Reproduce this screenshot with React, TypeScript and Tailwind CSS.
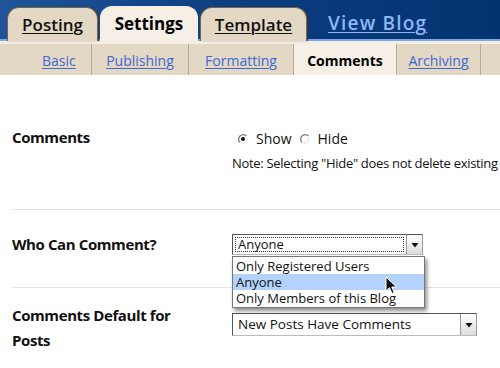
import React from 'react';

const tabs = [
  { label: 'Posting', active: false, w: 'w-[91px]' },
  { label: 'Settings', active: true, w: 'w-[98px]' },
  { label: 'Template', active: false, w: 'w-[107px]' },
];

const subTabs = [
  { label: 'Basic', w: 'w-[92px] pl-[42px]', active: false },
  { label: 'Publishing', w: 'w-[97px] justify-center', active: false },
  { label: 'Formatting', w: 'w-[105px] justify-center', active: false },
  { label: 'Comments', w: 'w-[103px] justify-center', active: true },
  { label: 'Archiving', w: 'w-[84px] justify-center', active: false },
];

const Radio = ({ checked }: { checked: boolean }) => (
  <svg width="12" height="12" viewBox="0 0 12 12" className="shrink-0">
    <path d="M9.5 3 A4.5 4.5 0 1 0 3 9.6" fill="none" stroke="#777" strokeWidth="1.3" />
    <path d="M9.8 4.2 A4.5 4.5 0 0 1 4.2 9.9" fill="none" stroke="#ddd" strokeWidth="1" />
    {checked && <circle cx="6" cy="6" r="2" fill="#111" />}
  </svg>
);

const SelectArrow = () => (
  <div className="w-[16px] h-full border-l border-[#999] bg-gradient-to-b from-[#ffffff] to-[#dcdcdc] flex items-center justify-center">
    <svg width="8" height="6" viewBox="0 0 8 6">
      <path d="M0.5 1 L7.5 1 L4 5.5 Z" fill="#111" />
    </svg>
  </div>
);

const Cursor = () => (
  <svg width="13" height="19" viewBox="0 0 13 19" className="absolute left-[152px] top-[19px]">
    <path d="M1 1 L1 15 L4.5 11.8 L7 17.5 L9.2 16.5 L6.8 11 L11.5 11 Z" fill="#111" stroke="#fff" strokeWidth="1" />
  </svg>
);

export default function App() {
  return (
    <div className="w-[500px] h-[368px] overflow-hidden bg-white font-['Open_Sans',sans-serif] text-[#111]">
      {/* top bar */}
      <div className="h-[41px] bg-gradient-to-r from-[#1f5498] via-[#0b3d80] to-[#033471] border-b-2 border-[#7ea6ea] flex items-end pl-[7px] gap-[2px]">
        {tabs.map(t => (
          <div
            key={t.label}
            className={`${t.w} -mb-[2px] rounded-t-[12px] border border-b-0 flex items-center justify-center text-[17px] ${
              t.active
                ? 'bg-[#f5efe6] border-[#f5efe6] font-bold h-[35px] text-black'
                : 'h-[34px] bg-[#e3d8c4] border-[#6f6656] shadow-[1px_0_1px_#3a3a3a] font-semibold'
            }`}
          >
            <span className={t.active ? '' : 'underline underline-offset-2 decoration-1'}>{t.label}</span>
          </div>
        ))}
        <div className="ml-[19px] self-center mt-[8px] text-[19px] tracking-[1.2px] font-semibold text-[#8fb6f3] underline underline-offset-2 decoration-1">
          View Blog
        </div>
      </div>

      {/* sub navigation */}
      <div className="h-[34px] bg-[#e3d8c4] border-t-[3px] border-[#f3ede3] flex">
        {subTabs.map(s => (
          <div
            key={s.label}
            className={`${s.w} h-full flex items-center pt-[2px] border-r border-[#b8ab94] text-[14px] ${
              s.active ? 'bg-[#f5efe6] font-bold text-black' : 'text-[#4068d4] underline underline-offset-2 decoration-1 font-medium'
            }`}
          >
            {s.label}
          </div>
        ))}
      </div>

      {/* form */}
      <div className="pl-[12px]">
        <div className="h-[135px] border-b border-[#e2e2e2] flex pt-[52px]">
          <div className="w-[220px] shrink-0 text-[15px] font-bold leading-[20px] tracking-[-0.4px]">Comments</div>
          <div className="flex flex-col pt-[2px]">
            <div className="flex items-center gap-[7px] text-[14px] leading-[20px] pl-[5px]">
              <Radio checked />
              <span>Show</span>
              <Radio checked={false} />
              <span>Hide</span>
            </div>
            <div className="text-[13px] leading-[18px] mt-[5px] whitespace-nowrap tracking-[-0.3px]">
              Note: Selecting "Hide" does not delete existing
            </div>
          </div>
        </div>

        <div className="h-[78px] border-b border-[#e2e2e2] flex pt-[24px]">
          <div className="w-[220px] shrink-0 text-[15px] font-bold leading-[20px] tracking-[-0.4px]">Who Can Comment?</div>
          <div className="relative">
            <div className="w-[191px] h-[21px] border border-[#555] border-b-[#bbb] border-r-[#999] bg-white flex items-stretch">
              <div className="flex-1 m-[2px] border border-dotted border-[#333] text-[13px] leading-[13px] pl-[2px] flex items-center">
                Anyone
              </div>
              <SelectArrow />
            </div>
            <div className="absolute z-10 left-0 top-[22px] w-[193px] bg-white border border-[#777] shadow-[2px_3px_4px_rgba(0,0,0,0.45)] text-[13px] leading-[16px] py-[1px]">
              <div className="pl-[3px]">Only Registered Users</div>
              <div className="pl-[3px] bg-[#b3d3fd]">Anyone</div>
              <div className="pl-[3px]">Only Members of this Blog</div>
              <Cursor />
            </div>
          </div>
        </div>

        <div className="flex pt-[15px]">
          <div className="w-[220px] shrink-0 text-[15px] font-bold leading-[25px] tracking-[-0.4px]">
            Comments Default for
            <br />
            Posts
          </div>
          <div className="w-[245px] h-[23px] mt-[10px] border border-[#555] border-b-[#bbb] border-r-[#999] bg-white flex items-stretch">
            <div className="flex-1 text-[13.5px] pl-[5px] flex items-center">New Posts Have Comments</div>
            <SelectArrow />
          </div>
        </div>
      </div>
    </div>
  );
}
